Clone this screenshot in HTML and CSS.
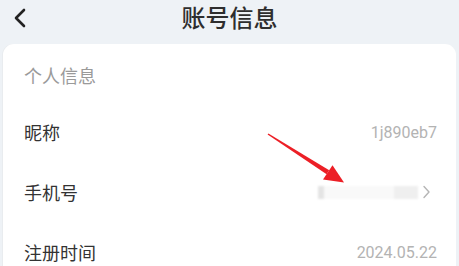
FILE: index.html
```html
<!DOCTYPE html>
<html lang="zh-CN">
<head>
<meta charset="utf-8">
<title>账号信息</title>
<link rel="stylesheet" href="styles.css">
</head>
<body>
<div class="page">
  <header class="topbar">
    <span class="back">
      <svg width="16" height="20" viewBox="0 0 16 20"><path d="M12 2 L4 10 L12 18" fill="none" stroke="#222" stroke-width="2.6" stroke-linecap="round" stroke-linejoin="round"/></svg>
    </span>
    <h1 class="title">账号信息</h1>
    <span class="spacer"></span>
  </header>
  <main class="card">
    <div class="section-title">个人信息</div>
    <div class="row">
      <span class="label">昵称</span>
      <span class="value">1j890eb7</span>
    </div>
    <div class="row">
      <span class="label">手机号</span>
      <span class="value-link">
        <span class="masked"><span class="m1"></span><span class="m2"></span><span class="m3"></span></span>
        <svg class="chev" width="9" height="14" viewBox="0 0 9 14"><path d="M2 1.5 L7 7 L2 12.5" fill="none" stroke="#b5b5b5" stroke-width="1.4" stroke-linecap="round" stroke-linejoin="round"/></svg>
      </span>
    </div>
    <div class="row">
      <span class="label">注册时间</span>
      <span class="value">2024.05.22</span>
    </div>
  </main>
  <svg class="annot" width="459" height="266" viewBox="0 0 459 266">
    <polygon points="267.6,134.6 268.4,133.4 329.2,170.2 326.6,174.3" fill="#ec1f26"/>
    <polygon points="344,182.5 332.5,165.2 323,179.4" fill="#ec1f26"/>
  </svg>
</div>
</body>
</html>
```

FILE: styles.css
```css
html, body {
  margin: 0;
  padding: 0;
}
body {
  background: #eef2f6;
  font-family: "Noto Sans CJK SC", "Noto Sans", sans-serif;
  width: 459px;
  height: 266px;
  overflow: hidden;
}
.page {
  position: relative;
  width: 459px;
  height: 266px;
  overflow: hidden;
}
.topbar {
  height: 44px;
  display: grid;
  grid-template-columns: 60px 1fr 60px;
  align-items: center;
}
.back {
  display: flex;
  align-items: center;
  padding-left: 12px;
  padding-bottom: 9px;
}
.title {
  margin: 0;
  text-align: center;
  font-size: 24px;
  font-weight: 500;
  color: #2e2e2e;
  line-height: 30px;
  padding-bottom: 10px;
}
.card {
  background: #fff;
  margin: 0 3px;
  border-radius: 11px 11px 0 0;
  padding: 0 19px 0 21px;
  height: 222px;
  box-shadow: -1px 0 0 #e9ecef;
}
.section-title {
  padding-top: 19px;
  padding-bottom: 15px;
  height: 24px;
  line-height: 24px;
  font-size: 18px;
  color: #9a9a9a;
}
.row {
  height: 60px;
  display: flex;
  align-items: center;
  justify-content: space-between;
}
.label {
  font-size: 18px;
  color: #333;
  line-height: 24px;
}
.value {
  font-family: Roboto, "Liberation Sans", sans-serif;
  font-size: 16px;
  color: #b3b3b3;
}
.value-link {
  display: flex;
  align-items: center;
  gap: 2px;
  margin-right: 6px;
}
.masked {
  display: flex;
  width: 100px;
  height: 13px;
  background: #f6f6f6;
  filter: blur(1.2px);
}
.masked .m1 {
  width: 6px;
  background: #e4e4e4;
}
.masked .m2 {
  width: 70px;
  background: #f9f9f9;
}
.masked .m3 {
  width: 24px;
  background: #efefef;
}
.chev {
  margin-left: 2px;
}
.annot {
  position: absolute;
  left: 0;
  top: 0;
  pointer-events: none;
}
```
